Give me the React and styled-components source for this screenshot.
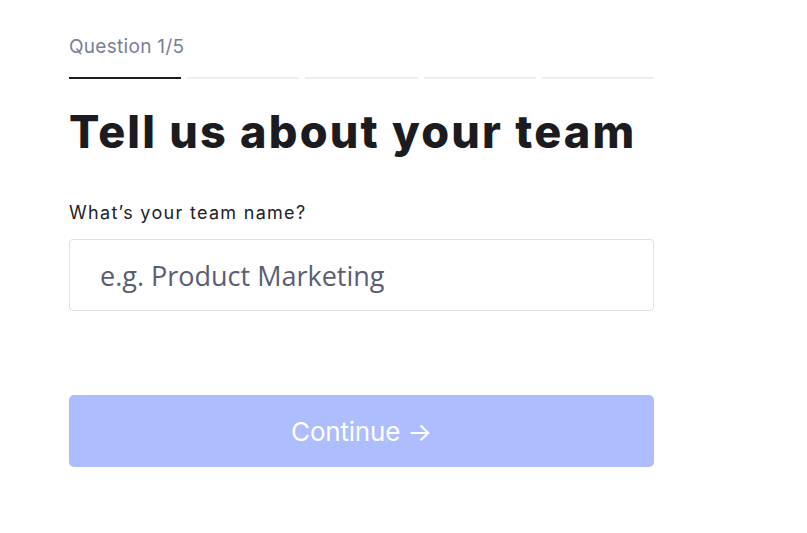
import React from "react";
import styled, { createGlobalStyle } from "styled-components";

const GlobalStyle = createGlobalStyle`
  html, body {
    margin: 0;
    padding: 0;
    background: #ffffff;
  }
  body {
    font-family: Inter, "Liberation Sans", sans-serif;
  }
`;

const steps = [true, false, false, false, false];

function App() {
  return (
    <>
      <GlobalStyle />
      <Page>
        <Form>
          <Step>Question 1/5</Step>
          <Progress>
            {steps.map((done, i) => (
              <Segment key={i} active={done} />
            ))}
          </Progress>
          <Title>Tell us about your team</Title>
          <Label htmlFor="team">What’s your team name?</Label>
          <Input id="team" placeholder="e.g. Product Marketing" />
          <Button disabled>Continue →</Button>
        </Form>
      </Page>
    </>
  );
}

export default App;

const Page = styled.div`
  min-height: 533px;
  padding: 31px 0 0 69px;
  box-sizing: border-box;
`;

const Form = styled.div`
  width: 585px;
  display: flex;
  flex-direction: column;
`;

const Step = styled.div`
  font-size: 19px;
  line-height: 32px;
  color: #7b7e98;
  letter-spacing: 0.3px;
`;

const Progress = styled.div`
  display: grid;
  grid-template-columns: repeat(5, 1fr);
  gap: 6px;
  margin-top: 14px;
`;

const Segment = styled.div`
  height: 2px;
  background: ${(p) => (p.active ? "#1c1c21" : "#eeeef0")};
`;

const Title = styled.h1`
  margin: 25px 0 0;
  font-size: 45px;
  line-height: 56px;
  font-weight: 800;
  color: #1b1b20;
  letter-spacing: 2.2px;
`;

const Label = styled.label`
  margin-top: 41px;
  font-size: 18px;
  line-height: 24px;
  color: #222226;
  letter-spacing: 1.3px;
`;

const Input = styled.input`
  margin-top: 14px;
  height: 72px;
  box-sizing: border-box;
  border: 1px solid #dfe0e5;
  border-radius: 4px;
  padding: 0 30px;
  font-family: "Open Sans", sans-serif;
  font-size: 27px;
  color: #1b1b20;
  outline: none;
  &::placeholder {
    color: #5b5e72;
  }
`;

const Button = styled.button`
  margin-top: 84px;
  height: 72px;
  border: none;
  border-radius: 5px;
  background: #aebdfd;
  color: #ffffff;
  font-family: Inter, "Liberation Sans", sans-serif;
  font-size: 26px;
  letter-spacing: -0.2px;
`;
